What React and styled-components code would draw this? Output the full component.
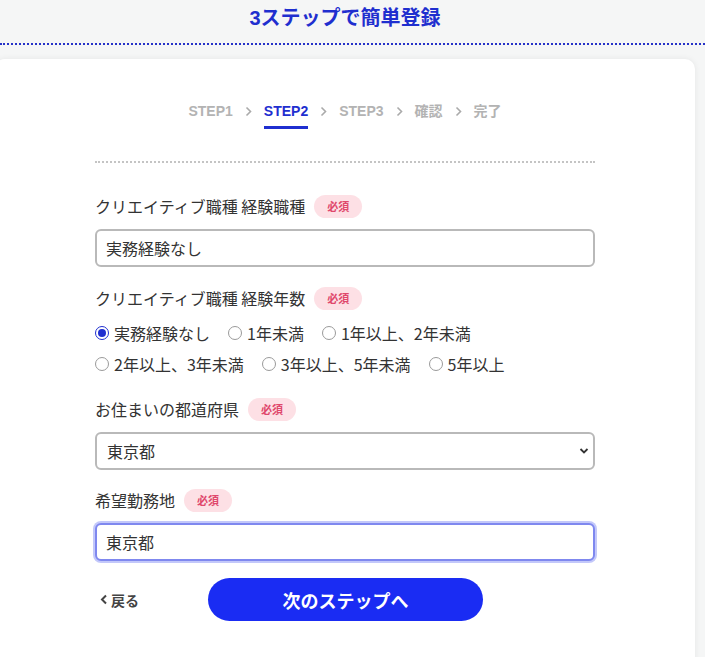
import React from "react";
import styled, { createGlobalStyle } from "styled-components";

const Global = createGlobalStyle`
  html, body { margin: 0; padding: 0; background: #f5f6f6; overflow: hidden; }
  body { font-family: "Liberation Sans", "Noto Sans CJK JP", sans-serif; color: #333; }
  * { box-sizing: border-box; }
`;

const Page = styled.div`
  width: 705px;
  height: 657px;
  overflow: hidden;
`;

const Header = styled.header`
  height: 45px;
  display: flex;
  justify-content: center;
  align-items: flex-start;
  padding-top: 5px;
  padding-right: 15px;
  border-bottom: 2px dotted #2632c8;
`;

const Title = styled.h1`
  margin: 0;
  font-size: 20px;
  line-height: 26px;
  font-weight: 700;
  color: #1f2fcf;
`;

const Card = styled.main`
  margin: 14px 0 0 -5px;
  width: 700px;
  min-height: 640px;
  background: #fff;
  border-radius: 10px;
  box-shadow: 0 0 6px rgba(0, 0, 0, 0.07);
  padding: 40px 100px 0;
`;

const Steps = styled.ol`
  list-style: none;
  margin: 0;
  padding: 0;
  display: flex;
  justify-content: center;
  align-items: flex-start;
  gap: 12px;
  height: 64px;
  border-bottom: 2px dotted #c4c4c4;
`;

const Step = styled.li`
  font-size: 14px;
  font-weight: 700;
  line-height: 24px;
  color: ${(p) => (p.$active ? "#1f2fd0" : "#b3b3b3")};
  padding-bottom: 3px;
  border-bottom: 3px solid ${(p) => (p.$active ? "#1f2fd0" : "transparent")};
`;

const Sep = styled.li`
  display: flex;
  align-items: center;
  height: 24px;
`;

const Field = styled.section`
  margin-top: ${(p) => p.$mt}px;
`;

const LabelRow = styled.div`
  display: flex;
  align-items: center;
  gap: 9px;
  height: 24px;
`;

const Label = styled.label`
  font-size: 16px;
  line-height: 24px;
  color: #333;
  font-family: "Noto Sans CJK JP", sans-serif;
`;

const Badge = styled.span`
  display: inline-flex;
  align-items: center;
  justify-content: center;
  width: 48px;
  height: 23px;
  border-radius: 12px;
  background: #fde0e5;
  color: #e0486c;
  font-size: 11px;
  font-weight: 700;
  font-family: "Noto Sans CJK JP", sans-serif;
`;

const TextInput = styled.input`
  display: block;
  width: 100%;
  height: 38px;
  margin-top: 11px;
  border: 2px solid ${(p) => (p.$focus ? "#7f88ef" : "#b9b9b9")};
  box-shadow: ${(p) => (p.$focus ? "0 0 0 2px #c3c8fa" : "none")};
  border-radius: 6px;
  padding: 0 9px;
  font-size: 16px;
  color: #333;
  font-family: "Noto Sans CJK JP", sans-serif;
  background: #fff;
  outline: none;
`;

const SelectWrap = styled.div`
  position: relative;
  margin-top: 11px;
`;

const Select = styled.select`
  display: block;
  width: 100%;
  height: 38px;
  border: 2px solid #b9b9b9;
  border-radius: 6px;
  padding: 0 10px;
  font-size: 16px;
  color: #333;
  font-family: "Noto Sans CJK JP", sans-serif;
  background: #fff;
  appearance: none;
  outline: none;
`;

const Chevron = styled.svg`
  position: absolute;
  right: 6px;
  top: 15px;
  pointer-events: none;
`;

const RadioGroup = styled.div`
  margin-top: 7px;
  display: flex;
  flex-direction: column;
`;

const RadioRow = styled.div`
  display: flex;
  align-items: center;
  height: 31px;
  gap: 18px;
`;

const RadioItem = styled.label`
  display: flex;
  align-items: center;
  gap: 5px;
  font-size: 16px;
  color: #333;
  font-family: "Noto Sans CJK JP", sans-serif;
`;

const Dot = styled.span`
  width: 14px;
  height: 14px;
  border-radius: 50%;
  border: ${(p) => (p.$on ? "1.5px solid #1f2fd0" : "1px solid #9a9a9a")};
  display: inline-flex;
  align-items: center;
  justify-content: center;
  background: #fff;
  &::after {
    content: "";
    width: 8px;
    height: 8px;
    border-radius: 50%;
    background: ${(p) => (p.$on ? "#1f2fd0" : "transparent")};
  }
`;

const Actions = styled.div`
  margin-top: 17px;
  display: flex;
  align-items: center;
  padding-left: 5px;
  gap: 63px;
`;

const Back = styled.a`
  display: flex;
  align-items: center;
  gap: 3px;
  font-size: 14px;
  font-weight: 700;
  color: #444;
  font-family: "Noto Sans CJK JP", sans-serif;
  text-decoration: none;
  width: 45px;
`;

const Next = styled.button`
  width: 275px;
  height: 43px;
  border: none;
  border-radius: 22px;
  background: #1a2cf3;
  color: #fff;
  font-size: 18px;
  font-weight: 700;
  font-family: "Noto Sans CJK JP", sans-serif;
`;

const Arrow = () => (
  <svg width="7" height="11" viewBox="0 0 7 11">
    <path d="M1.5 1.5 L5.5 5.5 L1.5 9.5" fill="none" stroke="#aaa" strokeWidth="1.6" />
  </svg>
);

const steps = ["STEP1", "STEP2", "STEP3", "確認", "完了"];

const Required = () => <Badge>必須</Badge>;

export default function App() {
  return (
    <Page>
      <Global />
      <Header>
        <Title>3ステップで簡単登録</Title>
      </Header>
      <Card>
        <Steps>
          {steps.map((s, i) => (
            <React.Fragment key={s}>
              {i > 0 && (
                <Sep>
                  <Arrow />
                </Sep>
              )}
              <Step $active={i === 1}>{s}</Step>
            </React.Fragment>
          ))}
        </Steps>

        <Field $mt={31}>
          <LabelRow>
            <Label>クリエイティブ職種 経験職種</Label>
            <Required />
          </LabelRow>
          <TextInput defaultValue="実務経験なし" />
        </Field>

        <Field $mt={19}>
          <LabelRow>
            <Label>クリエイティブ職種 経験年数</Label>
            <Required />
          </LabelRow>
          <RadioGroup>
            <RadioRow>
              <RadioItem><Dot $on />実務経験なし</RadioItem>
              <RadioItem><Dot />1年未満</RadioItem>
              <RadioItem><Dot />1年以上、2年未満</RadioItem>
            </RadioRow>
            <RadioRow>
              <RadioItem><Dot />2年以上、3年未満</RadioItem>
              <RadioItem><Dot />3年以上、5年未満</RadioItem>
              <RadioItem><Dot />5年以上</RadioItem>
            </RadioRow>
          </RadioGroup>
        </Field>

        <Field $mt={18}>
          <LabelRow>
            <Label>お住まいの都道府県</Label>
            <Required />
          </LabelRow>
          <SelectWrap>
            <Select defaultValue="東京都">
              <option>東京都</option>
            </Select>
            <Chevron width="10" height="8" viewBox="0 0 10 8">
              <path d="M1.5 2 L5 5.5 L8.5 2" fill="none" stroke="#333" strokeWidth="1.8" />
            </Chevron>
          </SelectWrap>
        </Field>

        <Field $mt={18}>
          <LabelRow>
            <Label>希望勤務地</Label>
            <Required />
          </LabelRow>
          <TextInput $focus defaultValue="東京都" />
        </Field>

        <Actions>
          <Back href="#">
            <svg width="8" height="11" viewBox="0 0 8 11">
              <path d="M6 1.5 L2 5.5 L6 9.5" fill="none" stroke="#444" strokeWidth="2" />
            </svg>
            戻る
          </Back>
          <Next>次のステップへ</Next>
        </Actions>
      </Card>
    </Page>
  );
}
